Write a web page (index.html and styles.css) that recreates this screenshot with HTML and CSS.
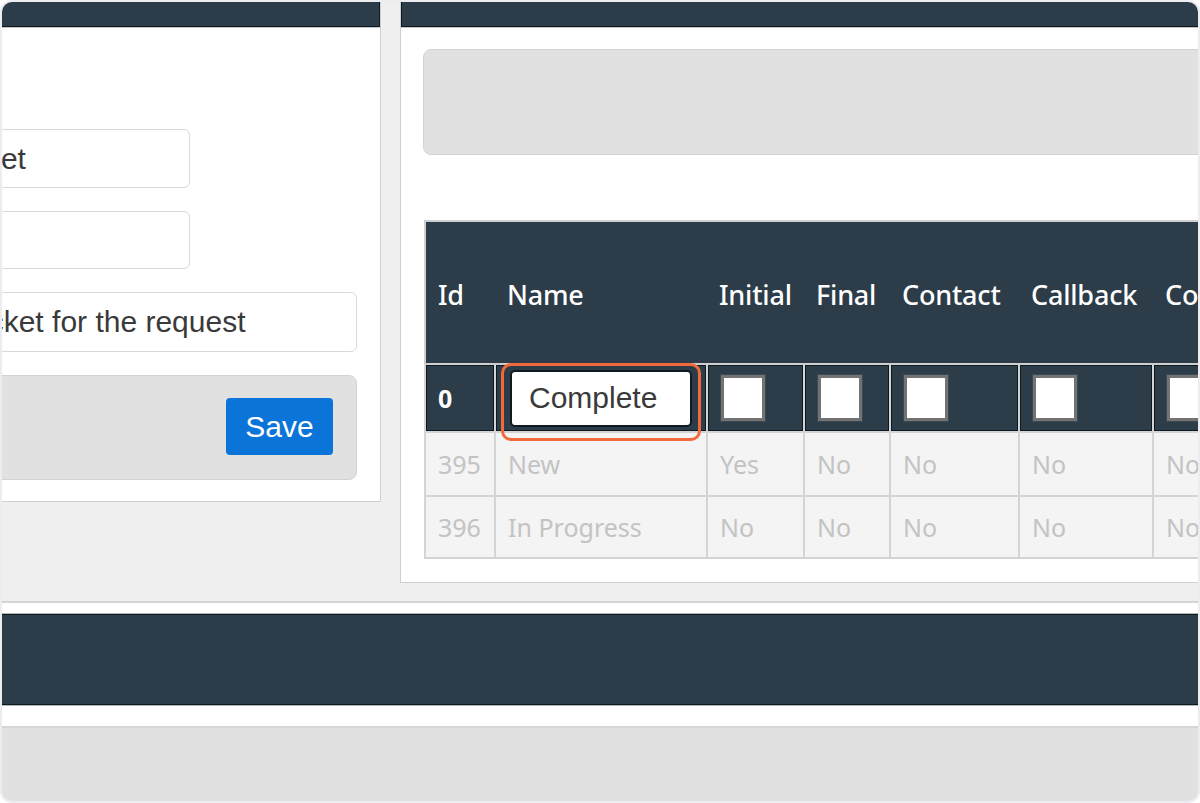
FILE: index.html
```html
<!DOCTYPE html>
<html lang="en">
<head>
<meta charset="utf-8">
<title>Statuses</title>
<link rel="stylesheet" href="styles.css">
</head>
<body>
<div class="frame">
  <div class="top">
    <section class="panel panel-left">
      <div class="panel-head"></div>
      <div class="panel-body left-body">
        <input class="field field-short f1" type="text" value="Ticket">
        <input class="field field-short f2" type="text" value="">
        <input class="field field-long f3" type="text" value="A ticket for the request">
        <div class="actions">
          <button class="btn-save" type="button">Save</button>
        </div>
      </div>
    </section>
    <section class="panel panel-right">
      <div class="panel-head"></div>
      <div class="panel-body right-body">
        <div class="filter-box"></div>
        <table class="grid">
          <colgroup>
            <col class="c-id"><col class="c-name"><col class="c-initial"><col class="c-final"><col class="c-contact"><col class="c-callback"><col class="c-last">
          </colgroup>
          <thead>
            <tr>
              <th class="first">Id</th>
              <th>Name</th>
              <th>Initial</th>
              <th>Final</th>
              <th>Contact</th>
              <th>Callback</th>
              <th>Complete</th>
            </tr>
          </thead>
          <tbody>
            <tr class="edit-row">
              <td class="id">0</td>
              <td class="name-cell">
                <input class="name-input" type="text" value="Complete">
                <span class="highlight"></span>
              </td>
              <td><input class="cb" type="checkbox"></td>
              <td><input class="cb" type="checkbox"></td>
              <td><input class="cb" type="checkbox"></td>
              <td><input class="cb" type="checkbox"></td>
              <td><input class="cb" type="checkbox"></td>
            </tr>
            <tr class="data-row r1">
              <td>395</td><td>New</td><td>Yes</td><td>No</td><td>No</td><td>No</td><td>No</td>
            </tr>
            <tr class="data-row r2">
              <td>396</td><td>In Progress</td><td>No</td><td>No</td><td>No</td><td>No</td><td>No</td>
            </tr>
          </tbody>
        </table>
      </div>
    </section>
  </div>
  <div class="bottom">
    <div class="dark-bar"></div>
    <div class="footer-box"></div>
  </div>
</div>
</body>
</html>
```

FILE: styles.css
```css
html, body {
  margin: 0;
  padding: 0;
  background: #ffffff;
}

.frame {
  width: 1200px;
  height: 803px;
  box-sizing: border-box;
  border: 2px solid #ececf1;
  border-radius: 12px;
  overflow: hidden;
  background: #efefef;
  display: flex;
  flex-direction: column;
  font-family: "Liberation Sans", Arial, sans-serif;
}

.top {
  display: flex;
  align-items: flex-start;
  gap: 19px;
  height: 599px;
  flex: 0 0 599px;
}

.panel {
  background: #ffffff;
  border-bottom: 1px solid #d0d0d0;
  box-sizing: border-box;
  flex: 0 0 auto;
}

.panel-left {
  margin-left: -92px;
  width: 471px;
  height: 500px;
  border-right: 1px solid #cfcfcf;
}

.panel-right {
  width: 900px;
  height: 581px;
  border-left: 1px solid #cfcfcf;
}

.panel-head {
  height: 24px;
  background: #2c3d49;
  border: 1px solid #0e1a22;
  border-top: 0;
}

.panel-body {
  border-top: 1px solid #c4c7ca;
}

.left-body {
  padding: 101px 0 0 23px;
  display: flex;
  flex-direction: column;
}

.field {
  display: block;
  box-sizing: border-box;
  border: 1px solid #d9d9d9;
  border-radius: 6px;
  padding: 0 13px;
  font-family: "Liberation Sans", Arial, sans-serif;
  font-size: 30px;
  color: #3a3a3a;
  background: #fff;
  outline: none;
}

.field-short { width: 257px; }
.field-long { width: 424px; }

.f1 { height: 59px; margin-bottom: 23px; }
.f2 { height: 58px; margin-bottom: 23px; }
.f3 { height: 60px; margin-bottom: 23px; }

.actions {
  width: 424px;
  height: 105px;
  box-sizing: border-box;
  background: #e1e1e1;
  border: 1px solid #d3d3d3;
  border-radius: 8px;
  display: flex;
  justify-content: flex-end;
  align-items: flex-start;
  padding: 22px 23px 0 0;
}

.btn-save {
  width: 107px;
  height: 57px;
  border: 0;
  border-radius: 4px;
  background: #0b74d8;
  color: #ffffff;
  font-family: "Liberation Sans", Arial, sans-serif;
  font-size: 30px;
  padding: 0;
}

.right-body {
  padding: 21px 0 0 22px;
}

.filter-box {
  width: 900px;
  height: 106px;
  box-sizing: border-box;
  background: #e1e1e1;
  border: 1px solid #d3d3d3;
  border-radius: 8px;
}

.grid {
  margin: 65px 0 0 1px;
  border-collapse: collapse;
  table-layout: fixed;
  width: 868px;
  font-family: "Noto Sans", "Open Sans", sans-serif;
  font-size: 25px;
}

.c-id { width: 70px; }
.c-name { width: 212px; }
.c-initial { width: 97px; }
.c-final { width: 86px; }
.c-contact { width: 129px; }
.c-callback { width: 134px; }
.c-last { width: 140px; }

.grid th {
  height: 137px;
  background: #2c3d49;
  color: #ffffff;
  font-size: 27px;
  font-weight: 500;
  letter-spacing: -0.2px;
  text-align: left;
  padding: 4px 11px 0 12px;
  white-space: nowrap;
  overflow: hidden;
  border-top: 2px solid #cfcfcf;
  border-bottom: 2px solid #cfcfcf;
}

.grid th.first {
  border-left: 2px solid #cfcfcf;
}

.grid td {
  border: 2px solid #d4d4d4;
  padding: 0 12px;
  white-space: nowrap;
  overflow: hidden;
}

.edit-row td {
  height: 66px;
  background: #2c3d49;
  box-shadow: inset 0 0 0 1px #0e1a22;
  color: #ffffff;
  font-weight: 700;
}

.edit-row td.name-cell {
  position: relative;
  overflow: visible;
  padding: 0 12px 0 14px;
}

.name-input {
  display: block;
  box-sizing: border-box;
  width: 182px;
  height: 57px;
  border: 2px solid #111a20;
  border-radius: 5px;
  background: #ffffff;
  padding: 0 0 0 17px;
  font-family: "Liberation Sans", Arial, sans-serif;
  font-size: 30px;
  color: #3a3a3a;
  outline: none;
}

.highlight {
  position: absolute;
  left: 5px;
  right: 5px;
  top: -2px;
  bottom: -10px;
  border: 3px solid #f26a3b;
  border-radius: 10px;
  pointer-events: none;
}

.cb {
  -webkit-appearance: none;
  appearance: none;
  display: block;
  margin: 0 0 0 1px;
  width: 44px;
  height: 46px;
  box-sizing: border-box;
  background: #ffffff;
  border: 3px solid #737373;
  box-shadow: 0 0 0 1px #3a4a55;
}

.data-row td {
  background: #f4f4f4;
  color: #c3c3c3;
  font-weight: 400;
}

.r1 td { height: 62px; }
.r2 td { height: 60px; }

.bottom {
  flex: 1 1 auto;
  display: flex;
  flex-direction: column;
  background: #ffffff;
  border-top: 2px solid #d5d5d5;
  padding-top: 11px;
}

.dark-bar {
  height: 89px;
  flex: 0 0 89px;
  background: #2c3d49;
  border-top: 1px solid #0e1a22;
  border-bottom: 1px solid #0e1a22;
  box-shadow: 0 -1px 0 #b5b5b5, 0 1px 0 #b5b5b5;
  margin-bottom: 21px;
}

.footer-box {
  flex: 1 1 auto;
  background: #e1e1e1;
  border-top: 2px solid #d6d6d6;
}
```
